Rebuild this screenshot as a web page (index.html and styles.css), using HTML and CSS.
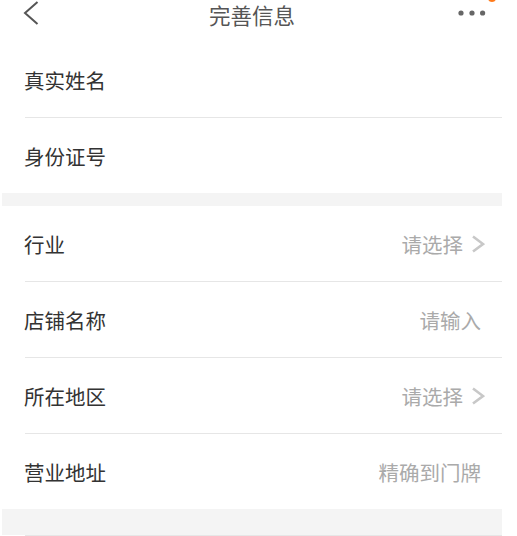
FILE: index.html
```html
<!DOCTYPE html>
<html>
<head>
  <meta charset="UTF-8">
  <title>完善信息</title>
  <meta name="viewport" content="width=device-width, initial-scale=1">
  <link rel="stylesheet" href="styles.css">
</head>
<body>
  <div class="page">
    <!-- Judul -->
    <div class="header">
      <div class="back">
        <svg width="16" height="26" viewBox="0 0 16 26">
          <polyline points="14.5,2 2,13 14.5,24" fill="none" stroke="#555" stroke-width="2"/>
        </svg>
      </div>
      <div class="title">完善信息</div>
      <div class="more">
        <svg width="28" height="8" viewBox="0 0 28 8">
          <circle cx="3" cy="4" r="2.6" fill="#666"/>
          <circle cx="14" cy="4" r="2.6" fill="#666"/>
          <circle cx="24.6" cy="4" r="2.6" fill="#666"/>
        </svg>
        <span class="badge"></span>
      </div>
    </div>

    <!-- Data pribadi -->
    <div class="group">
      <div class="row"><span class="label">真实姓名</span></div>
      <div class="row"><span class="label">身份证号</span></div>
    </div>

    <div class="gap"></div>

    <!-- Data toko -->
    <div class="group">
      <div class="row">
        <span class="label">行业</span>
        <span class="value">请选择<svg class="arrow" width="14" height="18" viewBox="0 0 14 18"><polyline points="2,1.5 12,9 2,16.5" fill="none" stroke="#c8c8c8" stroke-width="2.6"/></svg></span>
      </div>
      <div class="row">
        <span class="label">店铺名称</span>
        <span class="value">请输入</span>
      </div>
      <div class="row">
        <span class="label">所在地区</span>
        <span class="value">请选择<svg class="arrow" width="14" height="18" viewBox="0 0 14 18"><polyline points="2,1.5 12,9 2,16.5" fill="none" stroke="#c8c8c8" stroke-width="2.6"/></svg></span>
      </div>
      <div class="row">
        <span class="label">营业地址</span>
        <span class="value">精确到门牌</span>
      </div>
    </div>

    <div class="gap gap-big"></div>

    <div class="group">
      <div class="row row-cut"></div>
    </div>
  </div>
</body>
</html>
```

FILE: styles.css
```css
body {
  margin: 0;
  padding: 0;
  background: #fff;
  font-family: "Noto Sans CJK SC", "Noto Sans", sans-serif;
}

.page {
  width: 500px;
  margin-left: 2px;
}

/* Judul */
.header {
  height: 26px;
  margin-bottom: 16px;
  display: flex;
  align-items: center;
  justify-content: space-between;
  padding: 0 16px 0 21px;
  position: relative;
}

.back {
  width: 16px;
  height: 26px;
  display: flex;
}

.title {
  position: absolute;
  left: 0;
  right: 0;
  top: 1px;
  text-align: center;
  font-size: 21.5px;
  line-height: 28px;
  color: #555;
  pointer-events: none;
}

.more {
  position: relative;
  width: 28px;
  height: 8px;
  display: flex;
}

.badge {
  position: absolute;
  right: -10px;
  top: -15px;
  width: 8px;
  height: 8px;
  border-radius: 50%;
  background: #ff7a1a;
}

/* Baris */
.row {
  margin-left: 23px;
  height: 75px;
  padding-right: 21px;
  border-bottom: 1px solid #e6e6e6;
  display: flex;
  align-items: center;
  justify-content: space-between;
}

.group .row:last-child {
  border-bottom: none;
}

.label {
  font-size: 20.5px;
  color: #333;
  margin-left: -1px;
}

.value {
  font-size: 20.5px;
  color: #aaa;
  display: flex;
  align-items: center;
}

.arrow {
  margin-left: 8px;
  margin-right: -4px;
}

.gap {
  height: 13px;
  background: #f4f4f4;
}

.gap-big {
  height: 26px;
}

.group .row-cut {
  height: 0;
  border-top: 1px solid #e6e6e6;
}
```
